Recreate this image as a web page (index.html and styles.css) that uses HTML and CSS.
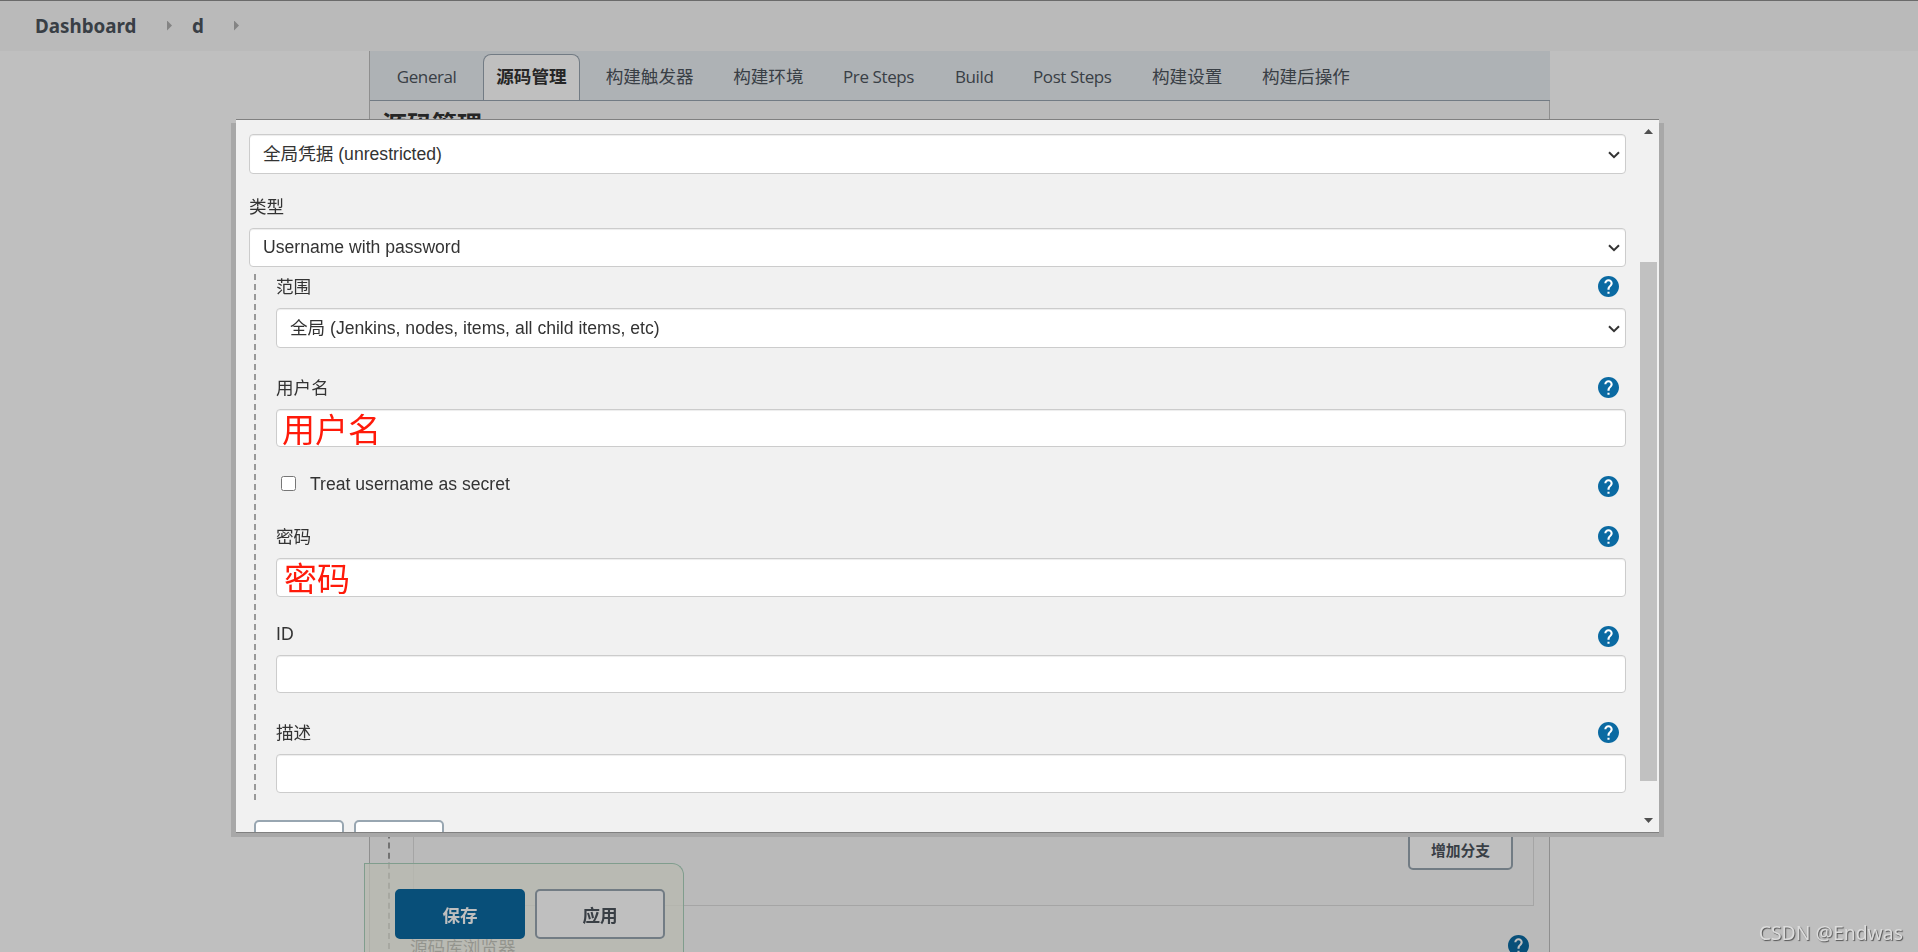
FILE: index.html
```html
<!DOCTYPE html>
<html lang="zh-CN">
<head>
  <meta charset="UTF-8">
  <meta name="viewport" content="width=device-width, initial-scale=1.0">
  <title>d Config [Jenkins]</title>
  <link rel="stylesheet" href="styles.css">
</head>
<body>
  <svg class="sprite" width="0" height="0">
    <symbol id="help" viewBox="2 2 20 20">
      <circle cx="12" cy="12" r="9.5" fill="#fff"/>
      <path fill="#0b6aa2" d="M12 2C6.48 2 2 6.48 2 12s4.48 10 10 10 10-4.48 10-10S17.52 2 12 2zm1 17h-2v-2h2v2zm2.07-7.75l-.9.92C13.45 12.9 13 13.5 13 15h-2v-.5c0-1.1.45-2.1 1.17-2.83l1.24-1.26c.37-.36.59-.86.59-1.41 0-1.1-.9-2-2-2s-2 .9-2 2H8c0-2.21 1.79-4 4-4s4 1.790 4 4c0 .88-.36 1.680-.93 2.250z"/>
    </symbol>
    <symbol id="chevron" viewBox="0 0 12 8">
      <path d="M1 1.2l5 5 5-5" fill="none" stroke="#333" stroke-width="2"/>
    </symbol>
  </svg>

  <header class="breadcrumbs">
    <a class="crumb-home">Dashboard</a>
    <span class="crumb-arrow"></span>
    <a class="crumb-job">d</a>
    <span class="crumb-arrow"></span>
  </header>

  <main class="panel">
    <nav class="tabs">
      <a class="tab tab-general">General</a>
      <a class="tab active">源码管理</a>
      <a class="tab">构建触发器</a>
      <a class="tab">构建环境</a>
      <a class="tab tab-pre">Pre Steps</a>
      <a class="tab tab-build">Build</a>
      <a class="tab tab-post">Post Steps</a>
      <a class="tab">构建设置</a>
      <a class="tab">构建后操作</a>
    </nav>
    <h2 class="section-title">源码管理</h2>
    <div class="scm">
      <div class="branches">
        <button class="btn btn-small">增加分支</button>
      </div>
      <div class="browser-row">
        <span>源码库浏览器</span>
        <svg class="help"><use href="#help"/></svg>
      </div>
    </div>
  </main>

  <div class="save-bar">
    <button class="btn btn-primary">保存</button>
    <button class="btn">应用</button>
  </div>

  <div class="mask"></div>

  <div class="dialog">
    <div class="dialog-body">
      <div class="select">
        <select><option>全局凭据 (unrestricted)</option></select>
        <svg class="chevron"><use href="#chevron"/></svg>
      </div>
      <div class="kind-label">类型</div>
      <div class="select select-kind">
        <select><option>Username with password</option></select>
        <svg class="chevron"><use href="#chevron"/></svg>
      </div>

      <div class="nested">
        <div class="label-row row-scope">
          <span>范围</span>
          <svg class="help"><use href="#help"/></svg>
        </div>
        <div class="select">
          <select><option>全局 (Jenkins, nodes, items, all child items, etc)</option></select>
          <svg class="chevron"><use href="#chevron"/></svg>
        </div>

        <div class="label-row row-user">
          <span>用户名</span>
          <svg class="help"><use href="#help"/></svg>
        </div>
        <div class="field field-user"><span class="note">用户名</span></div>

        <div class="label-row row-secret">
          <label class="check"><input type="checkbox">Treat username as secret</label>
          <svg class="help"><use href="#help"/></svg>
        </div>

        <div class="label-row row-pass">
          <span>密码</span>
          <svg class="help"><use href="#help"/></svg>
        </div>
        <div class="field field-pass"><span class="note">密码</span></div>

        <div class="label-row row-id">
          <span>ID</span>
          <svg class="help"><use href="#help"/></svg>
        </div>
        <div class="field field-id"></div>

        <div class="label-row row-desc">
          <span>描述</span>
          <svg class="help"><use href="#help"/></svg>
        </div>
        <div class="field field-desc"></div>
      </div>

      <div class="dialog-buttons">
        <button class="btn"></button>
        <button class="btn"></button>
      </div>
    </div>
    <div class="scrollbar">
      <span class="arrow-up"></span>
      <div class="thumb"></div>
      <span class="arrow-down"></span>
    </div>
  </div>

  <div class="watermark">CSDN @Endwas</div>
</body>
</html>
```
FILE: styles.css
```css
/* Base styles */
* {
  box-sizing: border-box;
}

body {
  margin: 0;
  height: 952px;
  overflow: hidden;
  display: flex;
  flex-direction: column;
  background-color: #fff;
  color: #333;
  font-family: "Open Sans", "Noto Sans CJK SC", sans-serif;
  font-size: 17.6px;
}

.sprite {
  position: absolute;
}

.help {
  width: 21px;
  height: 21px;
  flex: none;
}

/* Breadcrumbs */
.breadcrumbs {
  height: 51px;
  flex: none;
  display: flex;
  align-items: center;
  padding: 0 0 1px 35px;
  border-top: 1px solid #8f8f8f;
  background-color: #f8f8f8;
  color: #4d545d;
  font-family: "Noto Sans", sans-serif;
  font-size: 18.8px;
  font-weight: 700;
}

.crumb-home {
  width: 132px;
}

.crumb-job {
  width: 42px;
  margin-left: 20px;
}

.crumb-arrow {
  width: 5px;
  height: 10px;
  margin-top: 0;
  background-color: #b0b0b0;
  clip-path: polygon(0 0, 100% 50%, 0 100%);
}

/* Config panel */
.panel {
  width: 1181px;
  flex: 1;
  display: flex;
  flex-direction: column;
  margin-left: 369px;
  border: 1px solid #bfbfbf;
  border-width: 0 1px;
  background-color: #f8f8f8;
}

.tabs {
  height: 50px;
  flex: none;
  display: flex;
  align-items: flex-end;
  margin-right: -1px;
  padding-left: 7px;
  border-bottom: 1px solid #99a5b0;
  background-color: #e9eef2;
  color: #4d545d;
}

.tab {
  height: 46px;
  line-height: 43px;
  padding: 0 13px;
  margin: 0 5.75px;
  border: 1px solid transparent;
  border-width: 1px 1px 0;
  white-space: nowrap;
}

.tab.active {
  padding: 0 12.5px;
  border-color: #99a5b0;
  border-radius: 8px 8px 0 0;
  background-color: #fff;
  color: #333;
  font-weight: 700;
}

.tab-general,
.tab-pre,
.tab-build,
.tab-post {
  font-size: 17px;
  letter-spacing: -0.4px;
}

.tab-general {
  width: 88.5px;
}

.tab-pre {
  width: 100.5px;
}

.tab-build {
  width: 66.5px;
}

.tab-post {
  width: 107.5px;
}

.section-title {
  margin: 7px 0 0 12px;
  font-size: 25px;
  line-height: 32px;
}

.scm {
  flex: 1;
  margin: 0 15px 0 18px;
  border-left: 2px dashed #999;
}

.branches {
  height: 766px;
  margin-left: 23px;
  border: 1px solid #ddd;
  display: flex;
  justify-content: flex-end;
  align-items: flex-end;
  padding: 0 20px 35px 0;
}

.browser-row {
  display: flex;
  justify-content: space-between;
  padding: 29px 5px 0 20px;
  line-height: 24px;
}

/* Buttons */
.btn {
  width: 130px;
  height: 50px;
  border: 2px solid #98a6b1;
  border-radius: 5px;
  background-color: #fff;
  color: #4d545d;
  font: 700 17.6px "Open Sans", "Noto Sans CJK SC", sans-serif;
}

.btn-primary {
  border-color: #0b6aa2;
  background-color: #0b6aa2;
  color: #fff;
}

.btn-small {
  width: 105px;
  height: 38px;
  padding-bottom: 4px;
  font-size: 14.8px;
}

.save-bar {
  position: fixed;
  left: 364px;
  bottom: 0;
  width: 320px;
  height: 89px;
  display: flex;
  gap: 10px;
  padding: 25px 0 0 30px;
  border: 1px solid #abd2bd;
  border-width: 1px 1px 0;
  border-radius: 0 12px 0 0;
  background-color: rgba(247, 248, 236, 0.75);
}

.mask {
  position: fixed;
  inset: 0;
  background-color: rgba(0, 0, 0, 0.25);
}

/* Credentials dialog */
.dialog {
  position: fixed;
  left: 236px;
  top: 119px;
  width: 1423px;
  height: 714px;
  display: flex;
  border: 1px solid #808080;
  border-width: 1px 0;
  background-color: #f1f1f1;
  box-shadow: 5px 4px 0 0 #a8a8a8, -5px 4px 0 0 #a8a8a8;
  font-family: "Liberation Sans", "Noto Sans CJK SC", sans-serif;
}

.dialog-body {
  flex: 1;
  height: 712px;
  overflow: hidden;
  padding: 14px 14px 0 13px;
}

.select {
  height: 40px;
  display: flex;
  align-items: center;
  padding-right: 5px;
  border: 1px solid #ccc;
  border-radius: 4px;
  background-color: #fff;
  box-shadow: inset 0 1px 1px rgba(0, 0, 0, 0.075);
}

.select select {
  flex: 1;
  height: 38px;
  padding: 0 0 0 13px;
  border: none;
  background: none;
  appearance: none;
  color: #333;
  font: inherit;
}

.chevron {
  width: 12px;
  height: 8px;
  margin-top: 1px;
}

.kind-label {
  height: 54px;
  padding-top: 20px;
  line-height: 26px;
}

.select-kind {
  height: 39px;
}

.select-kind select {
  height: 37px;
  padding-bottom: 2px;
}

.nested {
  height: 526px;
  margin: 7px 0 0 5px;
  padding-left: 22px;
  background: repeating-linear-gradient(#999 0 6px, transparent 6px 10px) 0 0 / 2px 100% no-repeat;
}

.label-row {
  display: flex;
  justify-content: space-between;
  align-items: flex-start;
  padding-right: 7px;
  line-height: 26px;
}

.label-row .help {
  margin-top: 2px;
}

.row-scope {
  height: 34px;
}

.row-user {
  height: 61px;
  padding-top: 27px;
}

.row-secret {
  height: 77px;
  padding-top: 27px;
}

.row-pass {
  height: 34px;
}

.row-id {
  height: 58px;
  padding-top: 24px;
}

.row-id .help {
  margin-top: 5px;
}

.row-desc {
  height: 61px;
  padding-top: 27px;
}

.check {
  display: flex;
  align-items: center;
  margin-top: -3px;
}

.check input {
  width: 15px;
  height: 15px;
  margin: 0 14px 1px 5px;
}

.field {
  height: 38px;
  display: flex;
  align-items: center;
  padding-left: 5px;
  border: 1px solid #ccc;
  border-radius: 4px;
  background-color: #fff;
  box-shadow: inset 0 1px 1px rgba(0, 0, 0, 0.075);
}

.field-pass,
.field-desc {
  height: 39px;
}

.field-pass {
  padding-left: 7px;
}

.note {
  padding-top: 5px;
  color: #ff1a0a;
  font-size: 33px;
  line-height: 36px;
}

.dialog-buttons {
  display: flex;
  gap: 10px;
  margin: 20px 0 0 5px;
}

.dialog-buttons .btn {
  width: 90px;
  height: 38px;
}

/* Scrollbar */
.scrollbar {
  width: 17px;
  margin-right: 2px;
  display: flex;
  flex-direction: column;
  align-items: center;
}

.thumb {
  width: 17px;
  height: 519px;
  margin: 128px 0 37px;
  background-color: #c1c1c1;
}

.arrow-up,
.arrow-down {
  width: 9px;
  height: 5px;
  flex: none;
  background-color: #505050;
}

.arrow-up {
  margin-top: 9px;
  clip-path: polygon(50% 0, 100% 100%, 0 100%);
}

.arrow-down {
  clip-path: polygon(0 0, 100% 0, 50% 100%);
}

.watermark {
  position: fixed;
  right: 15px;
  bottom: 6px;
  color: #dcdcdc;
  font-family: "Noto Sans", sans-serif;
  font-size: 19.4px;
  text-shadow: 1px 1px 1px #555;
}
```
